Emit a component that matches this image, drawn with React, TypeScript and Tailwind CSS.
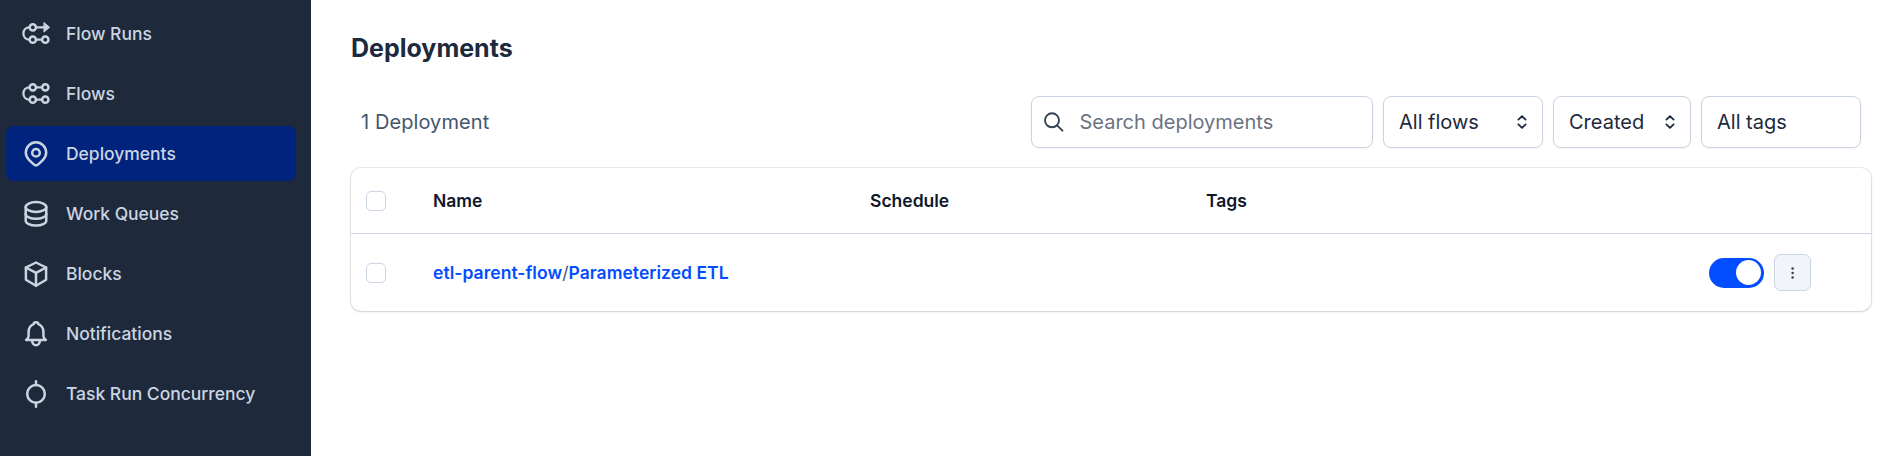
import type { ReactNode } from "react";

function Icon({ children }: { children: ReactNode }) {
  return (
    <svg viewBox="0 0.5 30 30" className="size-[30px] shrink-0" fill="none" stroke="currentColor" strokeWidth={2.5} strokeLinecap="round" strokeLinejoin="round">
      {children}
    </svg>
  );
}

const flowRunsIcon = (
  <Icon>
    <circle cx="11.8" cy="8.8" r="3.15" />
    <circle cx="11.8" cy="21.2" r="3.15" />
    <circle cx="24.3" cy="21.2" r="3.15" />
    <path d="M8.6 8.8C5 8.8 2.4 11.5 2.4 15S5 21.2 8.6 21.2M15 21.2h6M15 8.8h8" strokeWidth={2.3} />
    <path d="M23.2 4.2 28.6 8.8 23.2 13.4Z" fill="currentColor" strokeWidth={1} />
  </Icon>
);

const flowsIcon = (
  <Icon>
    <circle cx="11.8" cy="8.8" r="3.15" />
    <circle cx="24.3" cy="8.8" r="3.15" />
    <circle cx="11.8" cy="21.2" r="3.15" />
    <circle cx="24.3" cy="21.2" r="3.15" />
    <path d="M8.6 8.8C5 8.8 2.4 11.5 2.4 15S5 21.2 8.6 21.2M15 21.2h6M15 8.8h6" strokeWidth={2.3} />
  </Icon>
);

const pinIcon = (
  <Icon>
    <path d="M15 27C14 27 12.9 26.2 11.6 24.9L8 21.3C5.9 19.1 4.8 16.9 4.8 14a10.2 10.2 0 0 1 20.4 0C25.2 16.9 24.1 19.1 22 21.3L18.4 24.9C17.1 26.2 16 27 15 27Z" />
    <circle cx="15" cy="14.2" r="3.8" />
  </Icon>
);

const databaseIcon = (
  <Icon>
    <ellipse cx="15" cy="8.5" rx="10.3" ry="4.9" />
    <path d="M4.7 8.5V22.3C4.7 25 9.3 27.1 15 27.1S25.3 25 25.3 22.3V8.5" />
    <path d="M4.7 15.4C4.7 18.1 9.3 20.2 15 20.2S25.3 18.1 25.3 15.4" />
  </Icon>
);

const cubeIcon = (
  <Icon>
    <path d="M15 4 25.1 9v12.2L15 27.2 4.9 21.2V9Z" />
    <path d="M4.9 9 15 14.4 25.1 9M15 14.4v12.8" />
  </Icon>
);

const bellIcon = (
  <Icon>
    <path d="M12.7 5.6C12.7 4.4 13.7 3.7 15 3.7S17.3 4.4 17.3 5.6C20.6 6.9 22.4 9.6 22.4 13.4V17.6C22.4 19.5 23.3 20.3 24.9 21.5H5.1C6.7 20.3 7.6 19.5 7.6 17.6V13.4C7.6 9.6 9.4 6.9 12.7 5.6Z" />
    <path d="M11.2 22.5a3.8 4.3 0 0 0 7.6 0" />
  </Icon>
);

const concurrencyIcon = (
  <Icon>
    <circle cx="15" cy="15.4" r="8.8" />
    <path d="M15 2.8v3.6M15 24.6v3.6" />
  </Icon>
);

const navItems = [
  { label: "Flow Runs", icon: flowRunsIcon },
  { label: "Flows", icon: flowsIcon },
  { label: "Deployments", icon: pinIcon, active: true },
  { label: "Work Queues", icon: databaseIcon },
  { label: "Blocks", icon: cubeIcon },
  { label: "Notifications", icon: bellIcon },
  { label: "Task Run Concurrency", icon: concurrencyIcon },
];

function Sidebar() {
  return (
    <nav className="flex w-[311px] shrink-0 flex-col gap-[5px] bg-[#1e293b] pt-1.5 pr-[15px] pl-1.5">
      {navItems.map((item) => (
        <a
          key={item.label}
          className={`flex h-[55px] shrink-0 items-center gap-[15px] rounded-[8px] pl-[15px] text-[17.5px] font-medium text-[#cbd5e1] ${item.active ? "bg-[#00247e]" : ""}`}
        >
          {item.icon}
          <span className="pt-0.5 tracking-[-0.02px]">{item.label}</span>
        </a>
      ))}
    </nav>
  );
}

function Select({ label, width, chevrons = true }: { label: string; width: string; chevrons?: boolean }) {
  return (
    <button className={`flex h-[52px] items-center justify-between rounded-[8px] border border-[#cbd5e1] bg-white pr-[15px] pl-[15px] text-xl text-slate-800 shadow-xs ${width}`}>
      <span>{label}</span>
      {chevrons && (
        <svg viewBox="0 0 10 14" className="h-3.5 w-2.5" fill="none" stroke="currentColor" strokeWidth={1.8} strokeLinecap="round" strokeLinejoin="round">
          <path d="M1.4 4.6 5 1.1l3.6 3.5M1.4 9.4 5 12.9l3.6-3.5" />
        </svg>
      )}
    </button>
  );
}

function Checkbox() {
  return <span className="block size-5 rounded-[5px] border border-[#cbd5e1] bg-white" />;
}

export default function App() {
  return (
    <div className="flex h-[456px] w-[1896px] overflow-hidden bg-white font-['Inter',sans-serif]">
      <Sidebar />
      <main className="flex flex-1 flex-col pr-[25px] pl-10">
        <h1 className="mt-[31px] text-[25px] leading-[35px] font-bold text-slate-800">Deployments</h1>
        <div className="mt-[30px] flex items-center gap-2.5 pr-2.5 pl-2.5">
          <span className="mr-auto text-xl tracking-[0.08px] text-slate-600">1 Deployment</span>
          <div className="flex h-[52px] w-[342px] items-center rounded-[8px] border border-[#cbd5e1] bg-white pl-3 text-xl text-gray-500 shadow-xs">
            <svg viewBox="0 0 20 20" className="mr-[15.5px] size-5" fill="none" stroke="#334155" strokeWidth={1.9} strokeLinecap="round">
              <circle cx="8" cy="8.3" r="7" />
              <path d="m13.1 13.4 5.3 5.3" />
            </svg>
            <span>Search deployments</span>
          </div>
          <Select label="All flows" width="w-[160px]" />
          <Select label="Created" width="w-[138px]" />
          <Select label="All tags" width="w-[160px]" chevrons={false} />
        </div>
        <div className="mt-5 h-[143px] overflow-hidden rounded-[10px] bg-white shadow-[0_0_0_1px_rgba(0,0,0,0.08),0_1px_3px_0_rgba(0,0,0,0.12)]">
          <div className="grid h-[66px] grid-cols-[67px_437px_336px_1fr] items-center border-b border-[#cbd5e1] pl-[15px] text-[17.5px] font-semibold text-slate-900">
            <Checkbox />
            <span className="pt-0.5">Name</span>
            <span className="pt-0.5">Schedule</span>
            <span className="pt-0.5">Tags</span>
          </div>
          <div className="flex h-[77px] items-center pr-[60px] pl-[15px] text-[17.5px]">
            <Checkbox />
            <span className="ml-[47px] pt-0.5 tracking-[0.04px] text-slate-600">
              <a className="font-semibold text-[#024dfd]">etl-parent-flow</a>/<a className="font-semibold text-[#024dfd]">Parameterized ETL</a>
            </span>
            <span className="ml-auto flex h-[30px] w-[55px] items-center justify-end rounded-full bg-[#024dfd] pr-[3px]">
              <span className="size-[25px] rounded-full bg-white" />
            </span>
            <button className="ml-2.5 flex size-[37px] items-center justify-center rounded-[7px] border border-[#cbd5e1] bg-slate-100">
              <svg viewBox="0 0 4 14" className="h-3.5 w-1" fill="#334155">
                <circle cx="1.6" cy="2.6" r="1.25" />
                <circle cx="1.6" cy="7" r="1.25" />
                <circle cx="1.6" cy="11.4" r="1.25" />
              </svg>
            </button>
          </div>
        </div>
      </main>
    </div>
  );
}
